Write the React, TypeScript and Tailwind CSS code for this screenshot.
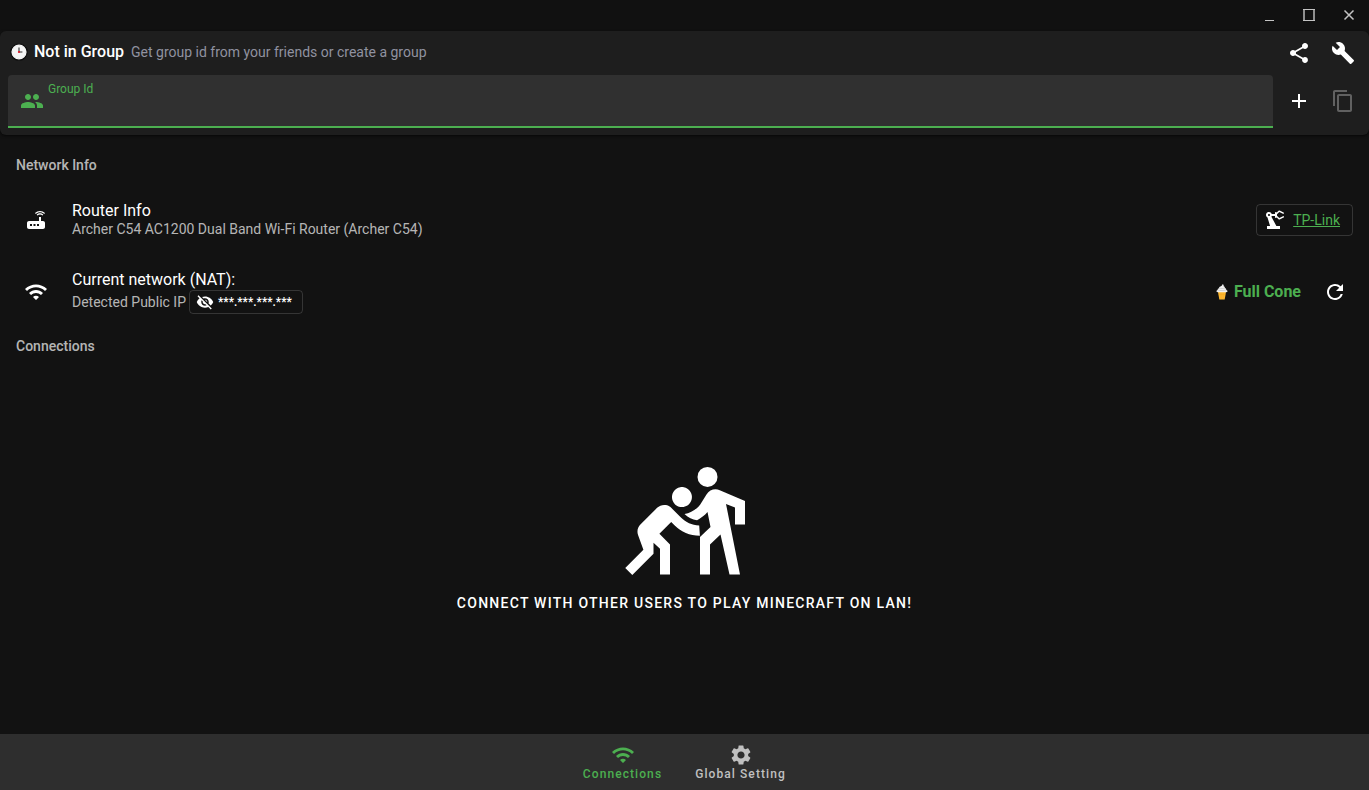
import { useState } from "react";
import type { ReactNode } from "react";
import {
  MdAdd,
  MdBuild,
  MdContentCopy,
  MdPeople,
  MdPrecisionManufacturing,
  MdRefresh,
  MdRouter,
  MdSettings,
  MdShare,
  MdSportsKabaddi,
  MdVisibilityOff,
  MdWifi,
} from "react-icons/md";

function ClockIcon() {
  return (
    <svg viewBox="0 0 18 18" className="size-[18px]" aria-hidden="true">
      <circle cx="9" cy="9" r="8.2" fill="#f4f4f4" stroke="#0a0a0a" strokeWidth="1.2" />
      <circle cx="9" cy="9" r="6.6" fill="none" stroke="#d4d4d4" strokeWidth="0.7" strokeDasharray="0.8 2.656" />
      <path d="M9 4.6V9h3.4" fill="none" stroke="#333" strokeWidth="1.1" />
      <circle cx="9" cy="9" r="1.1" fill="#e81224" />
    </svg>
  );
}

function ConeIcon() {
  return (
    <svg viewBox="0 0 12 18" className="h-[18px] w-3" aria-hidden="true">
      <path d="M2 9h8l-1.3 7.6H3.3z" fill="#fdb933" />
      <path d="M2.6 11.6h6.8M5 9.6v6.6M7.2 9.6v6.6" stroke="#f3a21c" strokeWidth="0.4" />
      <path
        d="M6.6 1c1 .7 1.3 1.5 1.1 2.3.9.3 1.4 1 1.2 1.8 1 .3 1.5 1 1.3 1.800.8.2 1.3.6 1.3 1.2 0 .8-.5 1.2-1.3 1.2H1.8C1 9.3.5 8.900.5 8.100c0-.6.5-1.1 1.2-1.2-.1-.9.4-1.5 1.3-1.7-.1-.9.4-1.5 1.4-1.8C5.6 3 6.6 2.3 6.6 1z"
        fill="#f2f2f2"
      />
      <path d="M3 5.2c2 .5 4.2.4 5.9-.1M1.7 7.1c2.8.7 6 .6 8.5-.1" fill="none" stroke="#bdbdbd" strokeWidth="0.6" />
    </svg>
  );
}

function WindowButton({ label, children }: { label: string; children: ReactNode }) {
  return (
    <button type="button" aria-label={label} className="flex h-full w-10 items-center justify-center text-[#c4c4c4]">
      <svg viewBox="0 0 16 16" className="size-4" fill="none" stroke="currentColor" aria-hidden="true">
        {children}
      </svg>
    </button>
  );
}

function IconButton({ label, disabled, children }: { label: string; disabled?: boolean; children: ReactNode }) {
  return (
    <button
      type="button"
      aria-label={label}
      disabled={disabled}
      className="flex size-9 shrink-0 items-center justify-center rounded-full text-2xl text-white disabled:text-white/30"
    >
      {children}
    </button>
  );
}

export default function App() {
  const [groupId, setGroupId] = useState("");

  return (
    <div className="flex min-h-screen flex-col bg-[#121212] font-[Roboto,sans-serif] text-white">
      <div className="flex h-[31px] shrink-0 justify-end bg-[#111111] pb-px">
        <WindowButton label="Minimize">
          <path d="M4 13.5h9" />
        </WindowButton>
        <WindowButton label="Maximize">
          <path d="M2 2.5h12M2 13.5h12" />
          <path d="M3 3v10M13 3v10" strokeWidth="2" opacity="0.7" />
        </WindowButton>
        <WindowButton label="Close">
          <path d="M3.5 3.5l9 9M12.5 3.5l-9 9" strokeWidth="1.5" />
        </WindowButton>
      </div>

      <header className="shrink-0 rounded-md bg-[#1e1e1e] pb-[7px] shadow-sm shadow-black/50">
        <div className="flex h-11 items-center pr-2 pl-2.5">
          <div className="flex flex-1 items-center pb-0.5">
            <ClockIcon />
            <h1 className="ml-1.5 text-base font-medium">Not in Group</h1>
            <p className="ml-[7px] text-sm text-[#9092a0]">Get group id from your friends or create a group</p>
          </div>
          <div className="flex gap-2">
            <IconButton label="Share">
              <MdShare />
            </IconButton>
            <IconButton label="Tools">
              <MdBuild />
            </IconButton>
          </div>
        </div>
        <div className="flex items-start px-2">
          <div className="flex h-[53px] flex-1 items-start rounded-t border-b-2 border-[#4caf50] bg-[#303030] pl-3">
            <MdPeople className="mt-3.5 size-6 text-[#4caf50]" aria-hidden="true" />
            <div className="flex flex-1 flex-col pt-1.5 pl-1">
              <label htmlFor="group-id" className="text-xs leading-4 text-[#4caf50]">
                Group Id
              </label>
              <input
                id="group-id"
                type="text"
                value={groupId}
                onChange={(event) => setGroupId(event.target.value)}
                className="h-6 w-full bg-transparent text-base outline-none"
              />
            </div>
          </div>
          <div className="ml-2 flex gap-2 pt-2">
            <IconButton label="Create group">
              <MdAdd />
            </IconButton>
            <IconButton label="Copy group id" disabled>
              <MdContentCopy />
            </IconButton>
          </div>
        </div>
      </header>

      <main className="flex flex-1 flex-col">
        <section className="px-4 pt-1.5">
          <h2 className="flex h-12 items-center text-sm font-medium text-white/70">Network Info</h2>
          <div className="flex h-[62px] items-center">
            <MdRouter className="mx-2 size-6" aria-hidden="true" />
            <div className="ml-4 flex-1 pb-0.5">
              <h3 className="text-base leading-5">Router Info</h3>
              <p className="text-sm leading-4 text-white/70">Archer C54 AC1200 Dual Band Wi-Fi Router (Archer C54)</p>
            </div>
            <div className="flex h-8 items-center rounded border border-white/15 pr-3 pl-1.5">
              <MdPrecisionManufacturing className="mr-1.5 size-6" aria-hidden="true" />
              <a href="#tp-link" className="text-sm text-[#4caf50] underline">
                TP-Link
              </a>
            </div>
          </div>
          <div className="flex h-[82px] items-center">
            <MdWifi className="mx-2 size-6" aria-hidden="true" />
            <div className="ml-4 flex-1">
              <h3 className="text-base leading-5">Current network (NAT):</h3>
              <div className="flex items-center text-sm text-white/70">
                Detected Public IP
                <button
                  type="button"
                  aria-label="Show public IP"
                  className="ml-[3px] flex h-6 items-center rounded border border-white/15 pr-2.5 pl-1.5 text-xs font-medium text-white"
                >
                  <MdVisibilityOff className="mr-1 size-[18px]" aria-hidden="true" />
                  ***.***.***.***
                </button>
              </div>
            </div>
            <ConeIcon />
            <span className="mr-4 ml-1.5 text-base font-bold text-[#4caf50]">Full Cone</span>
            <IconButton label="Refresh network">
              <MdRefresh />
            </IconButton>
          </div>
        </section>

        <section className="flex flex-1 flex-col px-4">
          <h2 className="flex h-[26px] items-center text-sm font-medium text-white/70">Connections</h2>
          <div className="flex flex-1 flex-col items-center justify-center pb-4">
            <MdSportsKabaddi className="size-30" aria-hidden="true" />
            <p className="mt-2 text-sm font-medium tracking-[0.09em] uppercase">
              Connect with other users to play Minecraft on LAN!
            </p>
          </div>
        </section>
      </main>

      <nav className="flex h-14 shrink-0 justify-center bg-[#2e2e2e] text-xs font-medium tracking-[0.09em]">
        <button type="button" aria-current="page" className="flex w-28 flex-col items-center justify-center text-[#4caf50]">
          <MdWifi className="size-6" aria-hidden="true" />
          <span className="leading-[14px]">Connections</span>
        </button>
        <button type="button" className="flex w-31 flex-col items-center justify-center text-[#c0c0c0]">
          <MdSettings className="size-6" aria-hidden="true" />
          <span className="leading-[14px]">Global Setting</span>
        </button>
      </nav>
    </div>
  );
}
